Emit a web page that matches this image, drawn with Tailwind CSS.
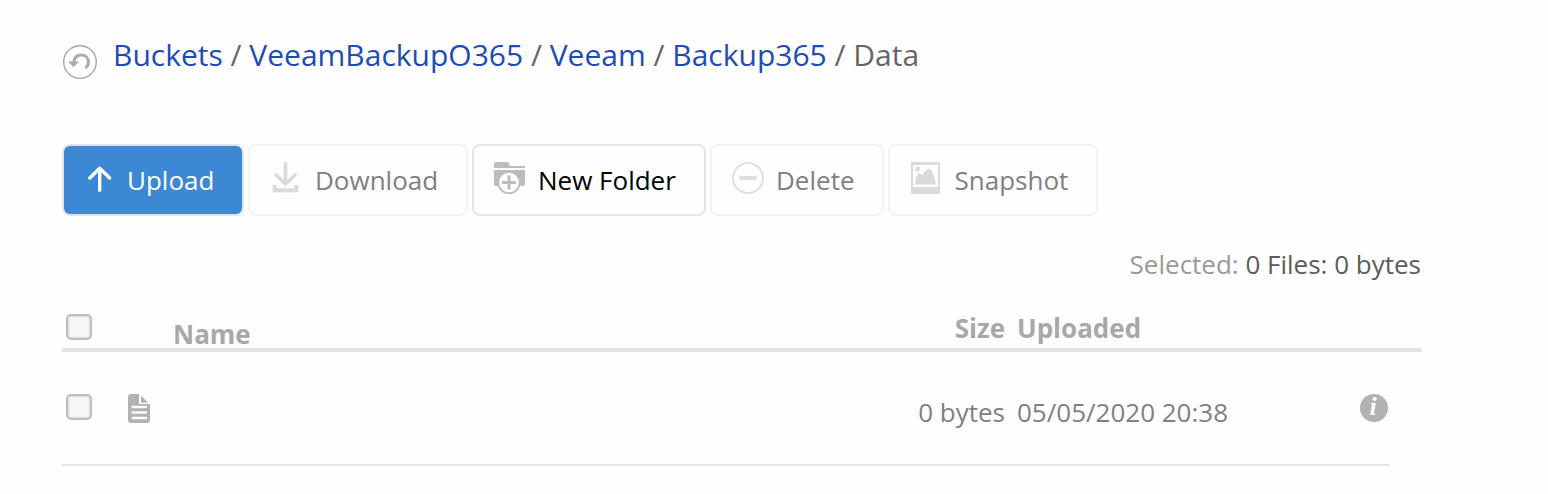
<!DOCTYPE html>
<html lang="en">
<head>
<meta charset="utf-8">
<title>Buckets</title>
<script src="https://cdn.jsdelivr.net/npm/@tailwindcss/browser@4"></script>
</head>
<body class="h-[494px] overflow-hidden bg-[#fefefe] pl-[62px] font-['Open_Sans','Noto_Sans',sans-serif] text-[26px] leading-9 text-[#808080]">
<header class="flex h-[110px] pt-[35px]">
  <svg class="mt-[9px] mr-[15px] h-9 w-9 shrink-0" viewBox="0 0 36 36" fill="none">
    <circle cx="18" cy="18" r="16.3" stroke="#a8a8a8" stroke-width="1.4"/>
    <path d="M11.8 19C12.2 13.5 14.8 11 19 11C23.6 11 26.4 14 26.4 18C26.4 20.8 25.4 22.6 23.2 24" stroke="#acacac" stroke-width="3.1"/>
    <path d="M6 17.6H17L11.4 23.2Z" fill="#acacac"/>
  </svg>
  <nav class="text-[30px] leading-10 whitespace-nowrap text-[#666]"><a class="text-[#1f4bb8]">Buckets</a> / <a class="text-[#1f4bb8]">VeeamBackupO365</a> / <a class="text-[#1f4bb8]">Veeam</a> / <a class="text-[#1f4bb8]">Backup365</a> / <span>Data</span></nav>
</header>
<div class="mt-[34px] flex h-[72px] gap-1 whitespace-nowrap">
  <button class="flex w-[182px] items-center rounded-lg border-2 border-[#e4e4e4] bg-[#3d88d4] pl-[22px] text-white">
    <svg class="mr-[13px] h-[30px] w-[28px] shrink-0" viewBox="0 0 28 30" fill="none" stroke="#fff" stroke-width="3.4" stroke-linecap="round" stroke-linejoin="round"><path d="M13.7 25.3V3.5M3.8 13L13.7 3.3L23.6 13"/></svg><span>Upload</span>
  </button>
  <button class="flex w-[220px] items-center rounded-lg border-2 border-[#f2f2f2] pl-[22px]">
    <svg class="mr-[15px] mb-1 h-[34px] w-[28px] shrink-0" viewBox="0 0 28 34" fill="none" stroke="#dadada"><path d="M13.5 2.5V23M4 14L13.5 23L23 14" stroke-width="3.6" stroke-linecap="round" stroke-linejoin="round"/><path d="M2.7 24V29.3H24.3V24" stroke-width="4"/></svg><span>Download</span>
  </button>
  <button class="flex w-[234px] items-center rounded-lg border-2 border-[#e4e4e4] pl-[20px] text-black">
    <svg class="mr-[12px] mb-1 h-[34px] w-[32px] shrink-0" viewBox="0 0 32 34"><path d="M0 5V3Q0 1 2 1H13Q15 1 15.3 3L15.7 5H31V7H0Z M0 9H31V23Q31 25 29 25H2Q0 25 0 23Z" fill="#bcbcbc"/><circle cx="15" cy="21.5" r="10.7" fill="#fefefe" stroke="#bcbcbc" stroke-width="1.8"/><path d="M15 14.5V28.5M8 21.5H22" stroke="#bcbcbc" stroke-width="3"/></svg><span>New Folder</span>
  </button>
  <button class="flex w-[174px] items-center rounded-lg border-2 border-[#f2f2f2] pl-[20px]">
    <svg class="mr-[12px] mb-1 h-8 w-8 shrink-0" viewBox="0 0 32 32" fill="none" stroke="#dedede"><circle cx="16" cy="16" r="15" stroke-width="2"/><path d="M7.5 16H24.5" stroke-width="4"/></svg><span>Delete</span>
  </button>
  <button class="flex w-[210px] items-center rounded-lg border-2 border-[#f2f2f2] pl-[21px]">
    <svg class="mr-[14.5px] mb-1 h-8 w-[29px] shrink-0" viewBox="0 0 29 32"><path d="M0 0H29V32H0Z" fill="#dadada"/><path d="M2 3H27V25H2Z" fill="#fefefe"/><circle cx="6.7" cy="7" r="2.4" fill="#dadada"/><path d="M4 22.5Q5 13 8 11Q10 12 11.3 13.5Q14 8 18 6.5Q23 9 25 22.5Z" fill="#dadada"/></svg><span>Snapshot</span>
  </button>
</div>
<div class="mt-[30px] w-[1359px] text-right text-[#5c5c5c]"><span class="text-[#999]">Selected:</span> 0 Files: 0 bytes</div>
<div class="mt-[28px] flex h-[42px] w-[1360px] border-b-4 border-[#e4e4e4] font-bold text-[#a8a8a8]">
  <span class="mt-[4px] ml-1 h-[26px] w-[26px] rounded-[5px] border-2 border-[#bdbdbd] bg-[#f6f6f6] shadow-[inset_0_0_2px_1px_#dcdcdc]"></span>
  <span class="mt-[6px] ml-[81px] w-[662px]">Name</span>
  <span class="w-[170px] text-right">Size</span><span class="ml-[12px]">Uploaded</span>
</div>
<div class="flex h-[114px] w-[1328px] border-b-2 border-[#e4e4e4] pt-[42px]">
  <span class="ml-1 h-[26px] w-[26px] rounded-[5px] border-2 border-[#bdbdbd] bg-[#f6f6f6] shadow-[inset_0_0_2px_1px_#dcdcdc]"></span>
  <svg class="ml-9 h-[30px] w-[22px]" viewBox="0 0 22 30"><path d="M3 0H11V10H22V26Q22 29 19 29H3Q0 29 0 26V3Q0 0 3 0ZM13 1.5L20 8.8H13Z" fill="#b2b2b2"/><path d="M4.7 13H18M4.7 18.5H18M4.7 24H18" stroke="#fefefe" stroke-width="2.4" stroke-linecap="round"/></svg>
  <span class="w-[855px] text-right">0 bytes</span><span class="ml-[12px] w-[343px]">05/05/2020 20:38</span>
  <span class="h-7 w-7 rounded-full bg-[#b2b2b2] pr-[2px] text-center font-['Liberation_Serif',serif] text-[26px] leading-[26px] font-bold text-white italic">i</span>
</div>
</body>
</html>
